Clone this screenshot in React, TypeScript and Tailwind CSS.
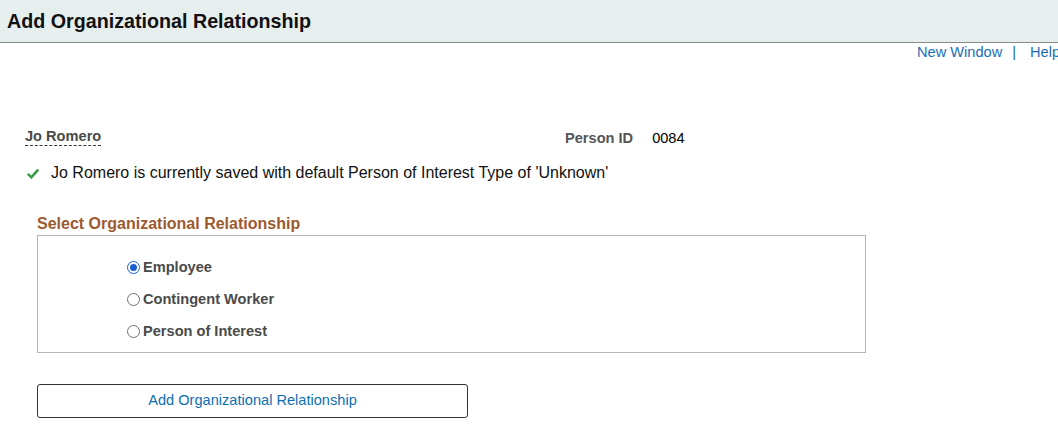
import React from "react";

function Radio({ checked, label }: { checked?: boolean; label: string }) {
  return (
    <div className="flex items-center h-[18px]">
      {checked ? (
        <span className="w-[13px] h-[13px] rounded-full border-[1.5px] border-[#1a5fd0] flex items-center justify-center">
          <span className="w-[7px] h-[7px] rounded-full bg-[#1a5fd0]" />
        </span>
      ) : (
        <span className="w-[13px] h-[13px] rounded-full border border-[#6f6f6f] bg-white" />
      )}
      <span className="ml-[3px] font-bold text-[#4a4a4a] text-[14.6px] leading-[18px]">{label}</span>
    </div>
  );
}

export default function App() {
  return (
    <div
      className="w-[1058px] h-[434px] overflow-hidden bg-white text-black"
      style={{ fontFamily: '"Liberation Sans", Arial, sans-serif' }}
    >
      <div className="h-[43px] bg-[#e7eeee] border-b border-[#8a8a86] flex items-center pl-[7px]">
        <h1 className="font-bold text-[19.7px] leading-[24px] text-[#111]">Add Organizational Relationship</h1>
      </div>

      <div className="flex justify-end items-center h-[18px] text-[14.6px] leading-[18px] mr-[-2px]">
        <span className="text-[#1b6fb6]">New Window</span>
        <span className="ml-[10px] text-[#1b6fb6]">|</span>
        <span className="ml-[14px] text-[#1b6fb6]">Help</span>
      </div>

      <div className="flex items-start mt-[63px] h-[22px]">
        <div className="ml-[25px] w-[540px]">
          <span className="inline-block font-bold text-[14.6px] leading-[18px] text-[#4a4a4a] border-b border-dashed border-[#333]">
            Jo Romero
          </span>
        </div>
        <div className="flex items-center mt-[5px]">
          <span className="font-bold text-[14.6px] leading-[18px] text-[#555]">Person ID</span>
          <span className="ml-[19px] text-[14.6px] leading-[18px] text-black">0084</span>
        </div>
      </div>

      <div className="flex items-center mt-[18px] h-[18px]">
        <svg className="ml-[27px]" width="12" height="11" viewBox="0 0 12 11">
          <path d="M0.8 5.8 L4.3 9.3 L11.2 1.6" fill="none" stroke="#3b9b4b" strokeWidth="2.6" />
        </svg>
        <span className="ml-[12px] text-[16px] leading-[18px] text-[#111]">
          Jo Romero is currently saved with default Person of Interest Type of 'Unknown'
        </span>
      </div>

      <div className="ml-[37px] mt-[33px] font-bold text-[16px] leading-[18px] text-[#9c5a2f]">
        Select Organizational Relationship
      </div>

      <div className="ml-[37px] mt-[2px] w-[829px] h-[118px] border border-[#b6b6ad] pl-[89px] pt-[22px] flex flex-col gap-[14px]">
        <Radio checked label="Employee" />
        <Radio label="Contingent Worker" />
        <Radio label="Person of Interest" />
      </div>

      <div className="ml-[37px] mt-[31px] w-[431px] h-[34px] border border-[#333] rounded-[3px] flex items-start justify-center pt-[6px]">
        <span className="text-[14.6px] leading-[18px] text-[#0d6fb3]">Add Organizational Relationship</span>
      </div>
    </div>
  );
}
